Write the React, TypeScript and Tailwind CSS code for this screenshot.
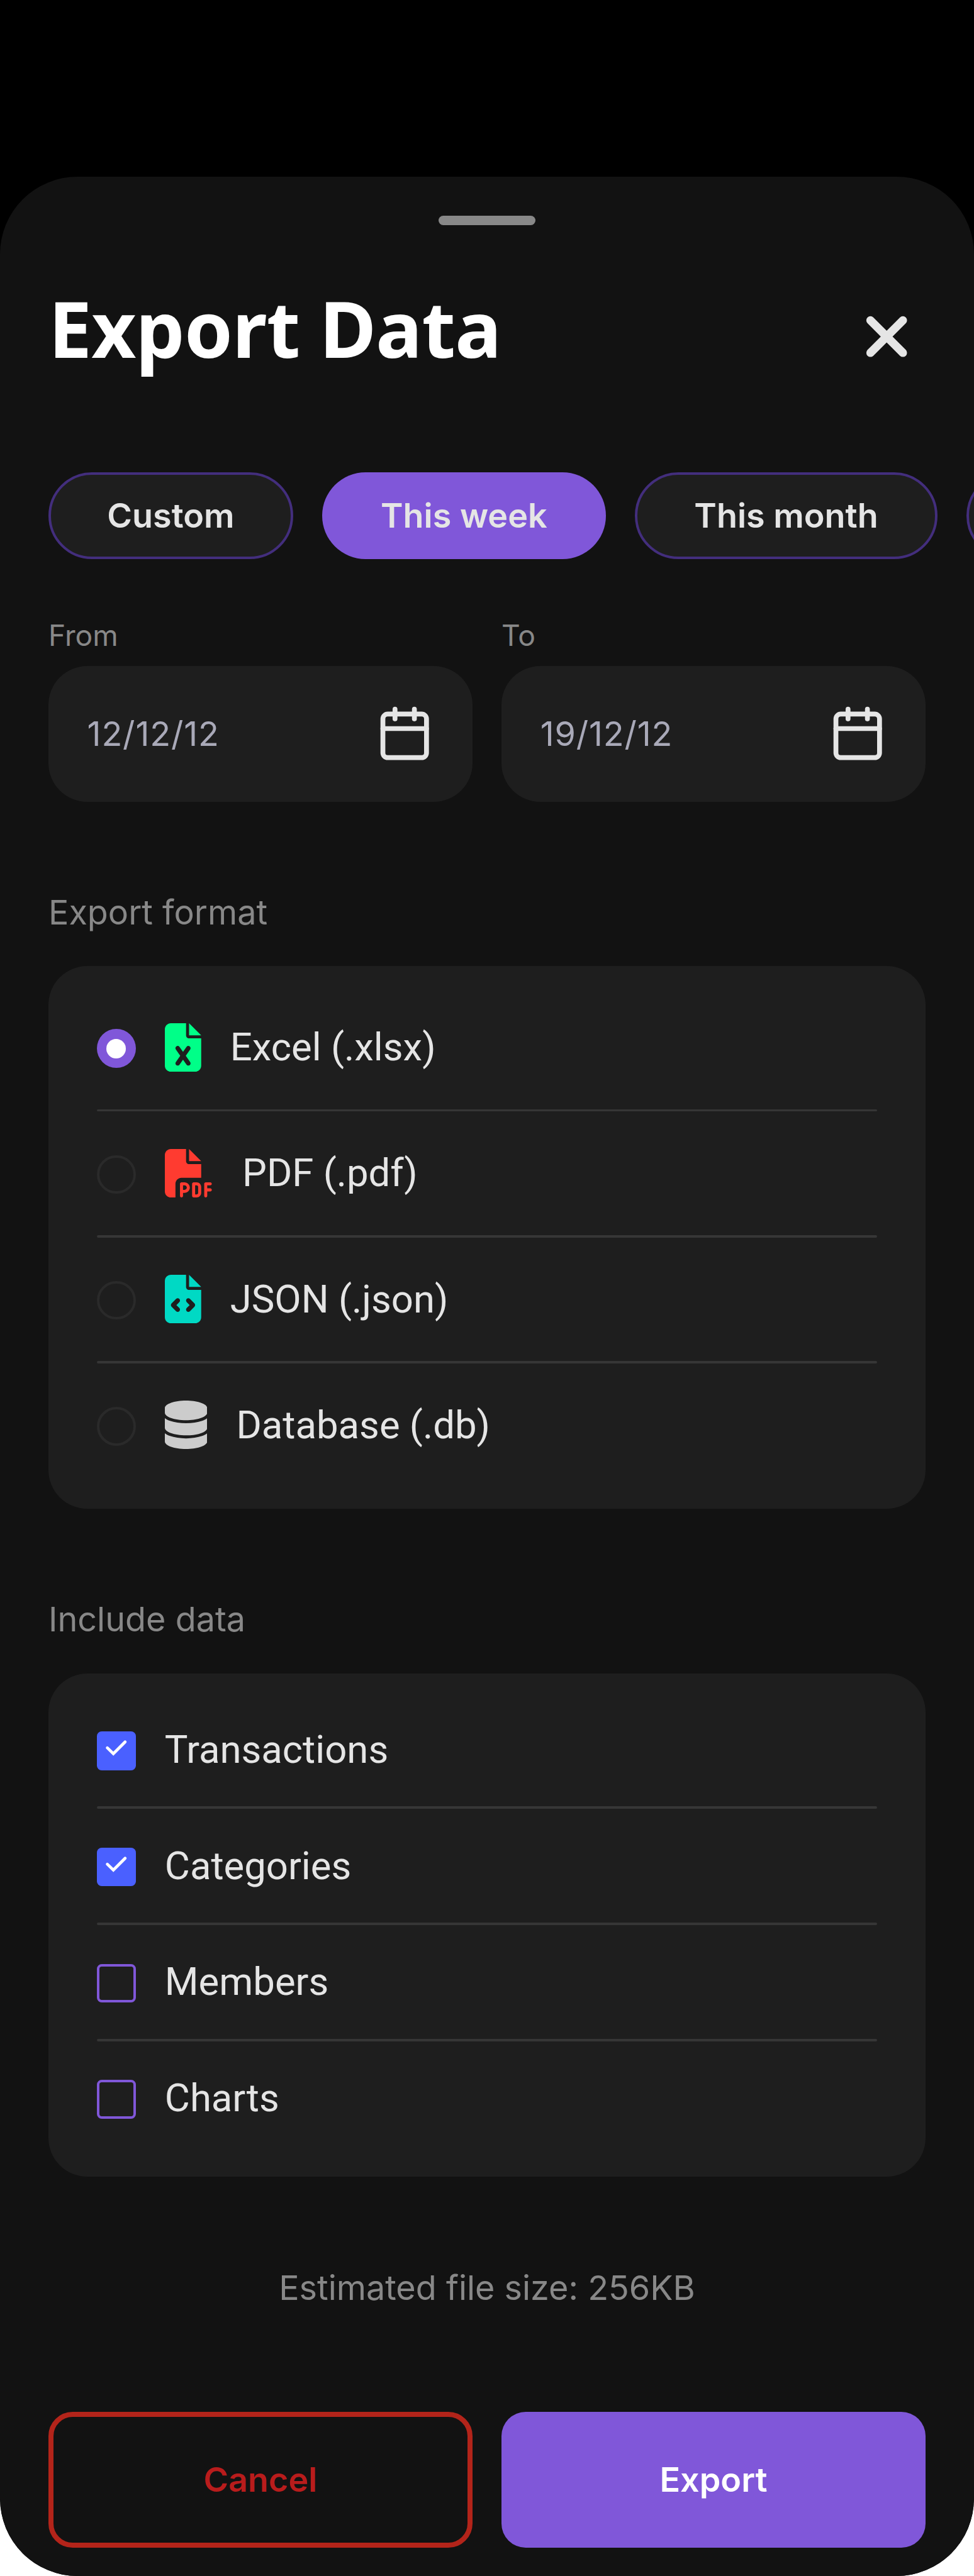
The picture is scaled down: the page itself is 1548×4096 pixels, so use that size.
import { FaDatabase, FaFileCode, FaFileExcel, FaFilePdf } from "react-icons/fa6";
import type { ReactNode } from "react";

const formats: { label: string; icon: ReactNode; selected: boolean }[] = [
  { label: "Excel (.xlsx)", selected: true, icon: <FaFileExcel className="h-20 w-15 text-[#00ff88]" /> },
  { label: "PDF (.pdf)", selected: false, icon: <FaFilePdf className="h-20 w-20 text-[#ff3b30]" /> },
  { label: "JSON (.json)", selected: false, icon: <FaFileCode className="h-20 w-15 text-[#00d9c4]" /> },
  { label: "Database (.db)", selected: false, icon: <FaDatabase className="h-20 w-[67.4px] text-[#cccccc]" /> },
];

const dataSets = [
  { label: "Transactions", checked: true },
  { label: "Categories", checked: true },
  { label: "Members", checked: false },
  { label: "Charts", checked: false },
];

const ranges = [
  { label: "Custom", active: false, width: "w-101" },
  { label: "This week", active: true, width: "w-117" },
  { label: "This month", active: false, width: "w-125" },
  { label: "", active: false, width: "w-101" },
];

function CalendarIcon() {
  return (
    <svg viewBox="0 0 24 24" className="size-24" fill="none" stroke="#e5e5e5" strokeWidth="2" strokeLinecap="round" strokeLinejoin="round">
      <path d="M8 2v4M16 2v4" />
      <rect x="3" y="4" width="18" height="18" rx="2" />
      <path d="M3 10h18" />
    </svg>
  );
}

function DateField({ label, value }: { label: string; value: string }) {
  return (
    <div className="w-175">
      <div className="h-20 text-[46.21px] leading-[57.8px] text-[#888888]">{label}</div>
      <div className="flex h-56 items-center justify-between rounded-[61.6px] bg-[#1e1e1e] px-16">
        <span className="text-[53.91px] leading-none tracking-[0.85px] text-[#a9a9b8]">{value}</span>
        <CalendarIcon />
      </div>
    </div>
  );
}

export default function App() {
  return (
    <div className="h-[4096px] w-[1548px] overflow-hidden bg-white font-[Inter,sans-serif] [--spacing:3.8507px]">
      <div className="h-full overflow-hidden rounded-b-[123.2px] bg-black pt-73">
        <div className="flex h-991 flex-col overflow-hidden rounded-[123.2px] bg-[#121212] pt-16">
          <div className="h-4 w-40 shrink-0 self-center rounded-full bg-[#888888]" />

          <header className="mt-20.5 flex h-44 shrink-0 items-center justify-between px-20">
            <h1 className="font-['Noto_Sans',sans-serif] text-[123.22px] leading-[1.362] font-bold tracking-[-0.7px] text-white">Export Data</h1>
            <svg viewBox="0 0 24 24" className="mt-7 mr-4 size-24" fill="none" stroke="#e5e5e5" strokeWidth="3.4" strokeLinecap="round">
              <path d="M5.3 5.3l13.4 13.4M18.7 5.3L5.3 18.7" />
            </svg>
          </header>

          <div className="mt-37.5 flex shrink-0 gap-12 pl-20">
            {ranges.map((range) => (
              <button
                key={range.label}
                className={`h-36 shrink-0 rounded-full text-[53.91px] leading-none font-semibold whitespace-nowrap text-[#e5e5e5] ${range.width} ${
                  range.active ? "bg-[#8057d9]" : "border-4 border-[#432e7d] bg-[#1e1e1e]"
                }`}
              >
                {range.label}
              </button>
            ))}
          </div>

          <div className="mt-24 flex shrink-0 gap-12 px-20">
            <DateField label="From" value="12/12/12" />
            <DateField label="To" value="19/12/12" />
          </div>

          <section className="mt-37 shrink-0 px-20">
            <h2 className="h-31 text-[53.91px] leading-[68.5px] text-[#888888]">Export format</h2>
            <div className="rounded-[61.6px] bg-[#1e1e1e] px-20 py-8">
              {formats.map((format, i) => (
                <div key={format.label}>
                  <div className="flex h-51 items-center gap-12">
                    {format.selected ? (
                      <span className="mt-1 flex size-16 items-center justify-center rounded-full bg-[#8057d9]">
                        <span className="size-8 rounded-full bg-white" />
                      </span>
                    ) : (
                      <span className="mt-1 size-16 rounded-full border-4 border-[#2a2a2a]" />
                    )}
                    {format.icon}
                    <span className="font-[Roboto,sans-serif] text-[61.61px] leading-[72.2px] text-[#e5e5e5]">{format.label}</span>
                  </div>
                  <div className={i < formats.length - 1 ? "h-1 rounded-full bg-[#363636]" : "h-1"} />
                </div>
              ))}
            </div>
          </section>

          <section className="mt-37 shrink-0 px-20">
            <h2 className="h-31 text-[53.91px] leading-[68.5px] text-[#888888]">Include data</h2>
            <div className="rounded-[61.6px] bg-[#1e1e1e] px-20 py-8">
              {dataSets.map((item, i) => (
                <div key={item.label}>
                  <div className="flex h-47 items-center gap-12">
                    {item.checked ? (
                      <span className="mt-1 flex size-16 rounded-[7.7px] bg-[#4a60ff]">
                        <svg viewBox="0 0 16 16" className="size-16" fill="none" stroke="white" strokeWidth="1.2" strokeLinecap="round">
                          <path d="M4.3 6.8l2.5 2.4 4.85-4.85" />
                        </svg>
                      </span>
                    ) : (
                      <span className="mt-1 size-16 rounded-[7.7px] border-4 border-[#8057d9]" />
                    )}
                    <span className="font-[Roboto,sans-serif] text-[61.61px] leading-[72.2px] text-[#e5e5e5]">{item.label}</span>
                  </div>
                  <div className={i < dataSets.length - 1 ? "h-1 rounded-full bg-[#363636]" : "h-1"} />
                </div>
              ))}
            </div>
          </section>

          <p className="mt-37 h-60 shrink-0 text-center text-[53.91px] leading-[68.5px] text-[#888888]">Estimated file size: 256KB</p>

          <div className="flex shrink-0 gap-12 px-20">
            <button className="h-56 w-175 rounded-[38.5px] border-8 border-[#b3241a] text-[53.91px] leading-none font-semibold text-[#b91c1c]">Cancel</button>
            <button className="h-56 w-175 rounded-[38.5px] bg-[#8057d9] text-[53.91px] leading-none font-semibold text-white">Export</button>
          </div>
        </div>
      </div>
    </div>
  );
}
